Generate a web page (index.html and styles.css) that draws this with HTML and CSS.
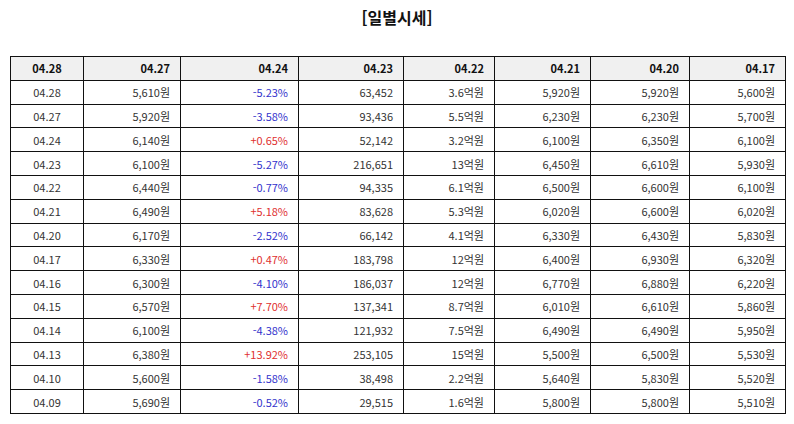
FILE: index.html
```html
<!DOCTYPE html>
<html lang="ko">
<head>
<meta charset="utf-8">
<title>일별시세</title>
<link rel="stylesheet" href="styles.css">
</head>
<body>
<div class="page">
  <h1 class="title">[일별시세]</h1>
  <table class="daily">
    <colgroup>
      <col class="c1"><col class="c2"><col class="c3"><col class="c4"><col class="c5"><col class="c6"><col class="c7"><col class="c8">
    </colgroup>
    <thead>
      <tr><th class="center">04.28</th><th>04.27</th><th>04.24</th><th>04.23</th><th>04.22</th><th>04.21</th><th>04.20</th><th>04.17</th></tr>
    </thead>
    <tbody>
      <tr><td class="center">04.28</td><td>5,610원</td><td class="down">-5.23%</td><td>63,452</td><td>3.6억원</td><td>5,920원</td><td>5,920원</td><td>5,600원</td></tr>
      <tr><td class="center">04.27</td><td>5,920원</td><td class="down">-3.58%</td><td>93,436</td><td>5.5억원</td><td>6,230원</td><td>6,230원</td><td>5,700원</td></tr>
      <tr><td class="center">04.24</td><td>6,140원</td><td class="up">+0.65%</td><td>52,142</td><td>3.2억원</td><td>6,100원</td><td>6,350원</td><td>6,100원</td></tr>
      <tr><td class="center">04.23</td><td>6,100원</td><td class="down">-5.27%</td><td>216,651</td><td>13억원</td><td>6,450원</td><td>6,610원</td><td>5,930원</td></tr>
      <tr><td class="center">04.22</td><td>6,440원</td><td class="down">-0.77%</td><td>94,335</td><td>6.1억원</td><td>6,500원</td><td>6,600원</td><td>6,100원</td></tr>
      <tr><td class="center">04.21</td><td>6,490원</td><td class="up">+5.18%</td><td>83,628</td><td>5.3억원</td><td>6,020원</td><td>6,600원</td><td>6,020원</td></tr>
      <tr><td class="center">04.20</td><td>6,170원</td><td class="down">-2.52%</td><td>66,142</td><td>4.1억원</td><td>6,330원</td><td>6,430원</td><td>5,830원</td></tr>
      <tr><td class="center">04.17</td><td>6,330원</td><td class="up">+0.47%</td><td>183,798</td><td>12억원</td><td>6,400원</td><td>6,930원</td><td>6,320원</td></tr>
      <tr><td class="center">04.16</td><td>6,300원</td><td class="down">-4.10%</td><td>186,037</td><td>12억원</td><td>6,770원</td><td>6,880원</td><td>6,220원</td></tr>
      <tr><td class="center">04.15</td><td>6,570원</td><td class="up">+7.70%</td><td>137,341</td><td>8.7억원</td><td>6,010원</td><td>6,610원</td><td>5,860원</td></tr>
      <tr><td class="center">04.14</td><td>6,100원</td><td class="down">-4.38%</td><td>121,932</td><td>7.5억원</td><td>6,490원</td><td>6,490원</td><td>5,950원</td></tr>
      <tr><td class="center">04.13</td><td>6,380원</td><td class="up">+13.92%</td><td>253,105</td><td>15억원</td><td>5,500원</td><td>6,500원</td><td>5,530원</td></tr>
      <tr><td class="center">04.10</td><td>5,600원</td><td class="down">-1.58%</td><td>38,498</td><td>2.2억원</td><td>5,640원</td><td>5,830원</td><td>5,520원</td></tr>
      <tr><td class="center">04.09</td><td>5,690원</td><td class="down">-0.52%</td><td>29,515</td><td>1.6억원</td><td>5,800원</td><td>5,800원</td><td>5,510원</td></tr>
    </tbody>
  </table>
</div>
</body>
</html>
```
FILE: styles.css
```css
html, body {
  margin: 0;
  padding: 0;
  background: #ffffff;
}
body {
  font-family: "Noto Sans CJK KR", "Noto Sans", "DejaVu Sans", sans-serif;
  color: #333333;
}
.page {
  padding: 6px 10px 0 10px;
}
.title {
  margin: 0;
  height: 50px;
  text-align: center;
  font-size: 16px;
  font-weight: bold;
  color: #111111;
  line-height: 22px;
}
.daily {
  border-collapse: collapse;
  width: 775px;
  table-layout: fixed;
  font-size: 11px;
}
.daily tr {
  height: 23.8px;
}
.c1 { width: 73px; }
.c2 { width: 97px; }
.c3 { width: 118px; }
.c4 { width: 105px; }
.c5 { width: 91px; }
.c6 { width: 96px; }
.c7 { width: 99px; }
.c8 { width: 96px; }
.daily th,
.daily td {
  border: 1px solid #111111;
  text-align: right;
  padding: 0 10px 0 4px;
  line-height: 14px;
  white-space: nowrap;
}
.daily th {
  background: #f0f0f0;
  font-weight: bold;
  color: #111111;
}
.daily .center {
  text-align: center;
  padding: 0;
}
.daily .down { color: #3333cc; }
.daily .up { color: #e03030; }
```
